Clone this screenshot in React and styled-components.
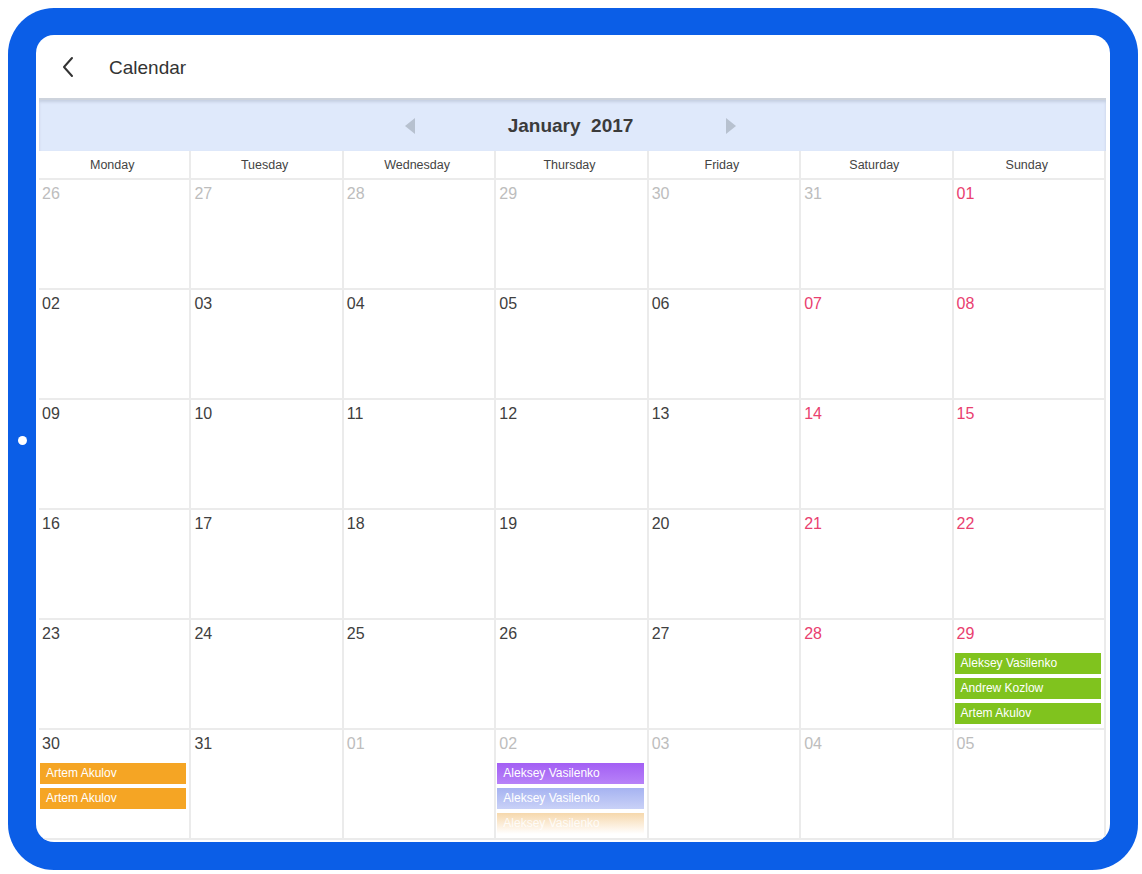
import React from "react";
import styled, { createGlobalStyle } from "styled-components";

const GlobalStyle = createGlobalStyle`
  body {
    margin: 0;
    background: #ffffff;
    font-family: "Liberation Sans", Arial, sans-serif;
  }
`;

const WEEKDAYS = ["Monday", "Tuesday", "Wednesday", "Thursday", "Friday", "Saturday", "Sunday"];

const EVENT_STYLES = {
  green: { bg: "#80c31e", color: "#ffffff" },
  orange: { bg: "#f5a524", color: "#ffffff" },
  purple: { bg: "linear-gradient(180deg, #a35ff4 0%, #b782f8 100%)", color: "#ffffff" },
  lavender: { bg: "linear-gradient(180deg, #a6b3f1 0%, #c9d1f7 100%)", color: "#ffffff" },
  peach: { bg: "linear-gradient(180deg, #f6d8ac 0%, #fdf3e6 70%, #ffffff 100%)", color: "rgba(255,255,255,0.85)" },
};

// six weeks, Monday first
const weeks = [
  ["26", "27", "28", "29", "30", "31", "01"],
  ["02", "03", "04", "05", "06", "07", "08"],
  ["09", "10", "11", "12", "13", "14", "15"],
  ["16", "17", "18", "19", "20", "21", "22"],
  ["23", "24", "25", "26", "27", "28", "29"],
  ["30", "31", "01", "02", "03", "04", "05"],
];

const events = {
  "4-6": [
    { name: "Aleksey Vasilenko", kind: "green" },
    { name: "Andrew Kozlow", kind: "green" },
    { name: "Artem Akulov", kind: "green" },
  ],
  "5-0": [
    { name: "Artem Akulov", kind: "orange" },
    { name: "Artem Akulov", kind: "orange" },
  ],
  "5-3": [
    { name: "Aleksey Vasilenko", kind: "purple" },
    { name: "Aleksey Vasilenko", kind: "lavender" },
    { name: "Aleksey Vasilenko", kind: "peach" },
  ],
};

const isOutside = (w, d) => (w === 0 && d < 6) || (w === 5 && d > 1);

const BackIcon = () => (
  <svg width="14" height="22" viewBox="0 0 14 22" fill="none">
    <polyline points="11,2 3,11 11,20" stroke="#333" strokeWidth="2" strokeLinecap="round" strokeLinejoin="round" />
  </svg>
);

const Arrow = ({ dir }) => (
  <svg width="10" height="16" viewBox="0 0 10 16">
    {dir === "left" ? <polygon points="10,0 0,8 10,16" fill="#b7c1cf" /> : <polygon points="0,0 10,8 0,16" fill="#b7c1cf" />}
  </svg>
);

export default function App() {
  return (
    <>
      <GlobalStyle />
      <Tablet>
        <SideDot />
        <Screen>
          <TopBar>
            <BackButton>
              <BackIcon />
            </BackButton>
            <PageTitle>Calendar</PageTitle>
          </TopBar>
          <Calendar>
            <MonthBar>
              <NavButton>
                <Arrow dir="left" />
              </NavButton>
              <MonthTitle>January&nbsp;&nbsp;2017</MonthTitle>
              <NavButton>
                <Arrow dir="right" />
              </NavButton>
            </MonthBar>
            <WeekHeader>
              {WEEKDAYS.map((d) => (
                <WeekDay key={d}>{d}</WeekDay>
              ))}
            </WeekHeader>
            <Grid>
              {weeks.map((week, w) =>
                week.map((day, d) => {
                  const tone = isOutside(w, d) ? "muted" : d >= 5 ? "weekend" : "normal";
                  const list = events[`${w}-${d}`] || [];
                  return (
                    <Cell key={`${w}-${d}`}>
                      <DayNum tone={tone}>{day}</DayNum>
                      {list.length > 0 && (
                        <EventList>
                          {list.map((e, i) => (
                            <Event key={i} kind={e.kind}>
                              {e.name}
                            </Event>
                          ))}
                        </EventList>
                      )}
                    </Cell>
                  );
                })
              )}
            </Grid>
          </Calendar>
        </Screen>
      </Tablet>
    </>
  );
}

const Tablet = styled.div`
  position: relative;
  box-sizing: border-box;
  margin: 8px 0 0 8px;
  width: 1130px;
  height: 862px;
  padding: 27px 28px 28px 28px;
  background: #0b5ee7;
  border-radius: 46px;
`;

const SideDot = styled.span`
  position: absolute;
  left: 10px;
  top: 428px;
  width: 9px;
  height: 9px;
  border-radius: 50%;
  background: #ffffff;
`;

const Screen = styled.div`
  display: flex;
  flex-direction: column;
  height: 100%;
  background: #ffffff;
  border-radius: 18px;
  overflow: hidden;
  padding: 0 4px 4px 3px;
  box-sizing: border-box;
`;

const TopBar = styled.div`
  display: flex;
  align-items: center;
  height: 63px;
  flex-shrink: 0;
`;

const BackButton = styled.div`
  display: flex;
  align-items: center;
  justify-content: center;
  width: 24px;
  margin-left: 17px;
`;

const PageTitle = styled.div`
  margin-left: 29px;
  margin-top: 2px;
  font-size: 19px;
  color: #333333;
`;

const Calendar = styled.div`
  display: flex;
  flex-direction: column;
  flex: 1;
`;

const MonthBar = styled.div`
  display: flex;
  align-items: center;
  justify-content: center;
  height: 53px;
  padding-right: 4px;
  background: #dfe9fb;
  border-top: 2px solid #cdd3dc;
  box-shadow: inset 0 2px 3px rgba(120, 130, 150, 0.25);
  box-sizing: border-box;
`;

const NavButton = styled.div`
  display: flex;
  align-items: center;
  width: 10px;
`;

const MonthTitle = styled.div`
  margin: 0 93px;
  font-size: 19px;
  font-weight: bold;
  color: #3b3b3b;
  white-space: nowrap;
`;

const WeekHeader = styled.div`
  display: grid;
  grid-template-columns: repeat(7, 1fr);
  height: 29px;
  border-bottom: 2px solid #ebebeb;
  box-sizing: border-box;
`;

const WeekDay = styled.div`
  display: flex;
  align-items: center;
  justify-content: center;
  padding-right: 4px;
  font-size: 12.5px;
  color: #444444;
  border-right: 2px solid #ebebeb;
`;

const Grid = styled.div`
  display: grid;
  grid-template-columns: repeat(7, 1fr);
  grid-template-rows: repeat(6, 110px);
`;

const Cell = styled.div`
  border-right: 2px solid #ebebeb;
  border-bottom: 2px solid #ebebeb;
  padding: 4px 3px 0 3px;
  overflow: hidden;
  min-width: 0;
`;

const TONES = {
  normal: "#404040",
  muted: "#bdbdbd",
  weekend: "#e9406f",
};

const DayNum = styled.div`
  font-size: 16px;
  line-height: 20px;
  color: ${(p) => TONES[p.tone]};
`;

const EventList = styled.div`
  display: flex;
  flex-direction: column;
  gap: 4px;
  margin: 9px 0 0 -2px;
`;

const Event = styled.div`
  height: 21px;
  line-height: 21px;
  padding-left: 6px;
  font-size: 12px;
  white-space: nowrap;
  background: ${(p) => EVENT_STYLES[p.kind].bg};
  color: ${(p) => EVENT_STYLES[p.kind].color};
`;
